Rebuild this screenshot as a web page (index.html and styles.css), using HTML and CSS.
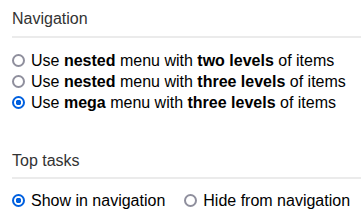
FILE: index.html
```html
<!DOCTYPE html>
<html lang="en">
<head>
  <meta charset="UTF-8">
  <meta name="viewport" content="width=device-width, initial-scale=1.0">
  <title>Navigation settings</title>
  <link rel="stylesheet" href="styles.css">
</head>
<body>
  <section class="group">
    <h2 class="group-title">Navigation</h2>
    <div class="options">
      <label class="option"><input type="radio" name="nav"><span>Use <b>nested</b> menu with <b>two levels</b> of items</span></label>
      <label class="option"><input type="radio" name="nav"><span>Use <b>nested</b> menu with <b>three levels</b> of items</span></label>
      <label class="option"><input type="radio" name="nav" checked><span>Use <b>mega</b> menu with <b>three levels</b> of items</span></label>
    </div>
  </section>

  <section class="group group-tasks">
    <h2 class="group-title">Top tasks</h2>
    <div class="options options-inline">
      <label class="option"><input type="radio" name="tasks" checked><span>Show in navigation</span></label>
      <label class="option"><input type="radio" name="tasks"><span>Hide from navigation</span></label>
    </div>
  </section>
</body>
</html>
```

FILE: styles.css
```css
body {
  margin: 0;
  font-family: "Liberation Sans", Arial, sans-serif;
  font-size: 16px;
  color: #000;
  background: #fff;
}
.group {
  padding-left: 12px;
}
.group-tasks {
  margin-top: 39px;
}
.group-title {
  margin: 0;
  padding: 10px 0 8px;
  font-size: 16px;
  font-weight: normal;
  line-height: 18px;
  color: #333;
  border-bottom: 2px solid #ebebeb;
}
.group-tasks .group-title {
  padding-top: 0;
  padding-bottom: 7px;
}
.options {
  margin-top: 12px;
}
.group-tasks .options {
  margin-top: 11px;
}
.options-inline {
  display: flex;
  gap: 19px;
}
.option {
  display: flex;
  align-items: center;
  height: 21px;
  white-space: nowrap;
}
.option input {
  appearance: none;
  box-sizing: border-box;
  width: 13px;
  height: 13px;
  margin: 0 6px 0 0;
  border: 2px solid #8f8f9d;
  border-radius: 50%;
  background: #fff;
}
.option input:checked {
  border-color: #0060df;
  background: radial-gradient(circle, #0060df 0 2.6px, #fff 3px);
}
```
